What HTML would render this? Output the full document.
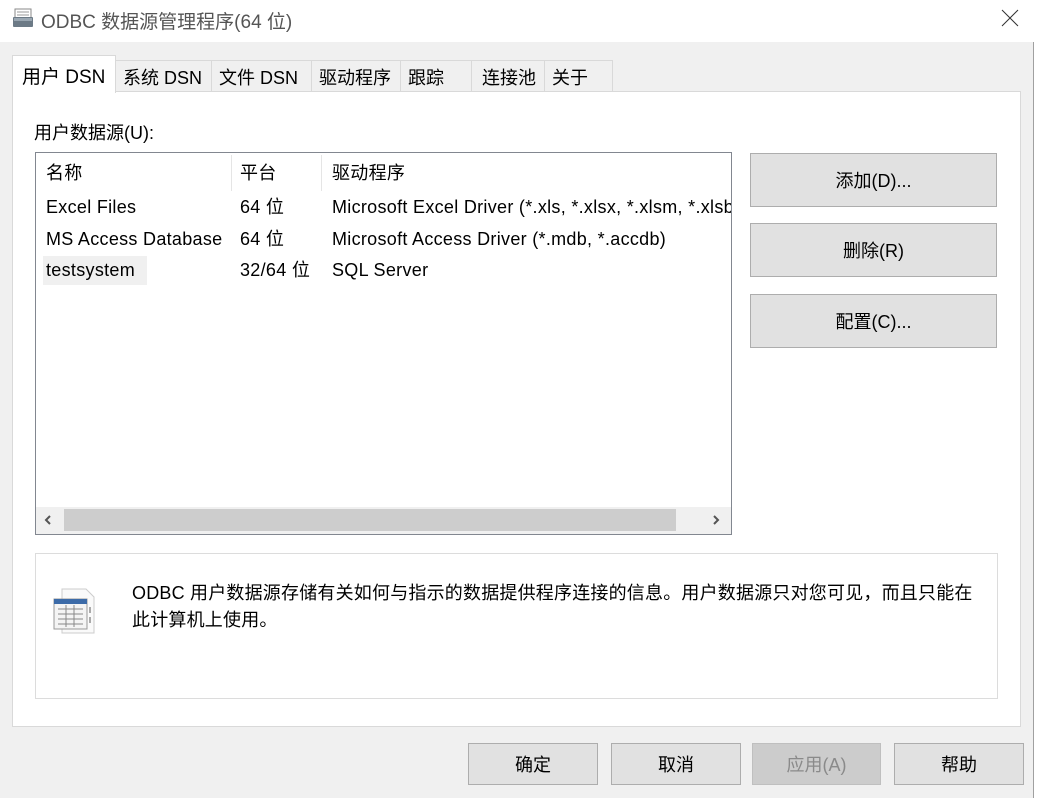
<!DOCTYPE html>
<html><head><meta charset="utf-8"><style>
*{box-sizing:border-box;margin:0;padding:0}
body{width:1046px;height:798px;background:#fff;font-family:"Liberation Sans","Noto Sans CJK SC",sans-serif;font-size:18px;color:#000;position:relative;overflow:hidden}
.a{position:absolute}
.dlg{left:0;top:42px;width:1034px;height:756px;background:#f0f0f0;border-right:1px solid #a0a0a0}
.tab{top:60px;height:31px;border:1px solid #d9d9d9;border-bottom:none;background:#f0f0f0;padding:3px 0 0 7px;white-space:nowrap}
.panel{left:12px;top:91px;width:1009px;height:636px;background:#fff;border:1px solid #d9d9d9}
.btn{background:#e1e1e1;border:1px solid #adadad;text-align:center;display:flex;align-items:center;justify-content:center}
.row{height:32px;line-height:32px;white-space:nowrap;letter-spacing:.3px}
</style></head><body>
<svg class="a" style="left:12px;top:7px" width="22" height="22" viewBox="0 0 22 22"><rect x="3" y="2" width="16" height="9" fill="#fff" stroke="#8a8a8a"/><path d="M5 5h12M5 8h12" stroke="#999"/><rect x="1" y="10" width="20" height="10" rx="1" fill="#6c7a86"/><rect x="2" y="11" width="18" height="3" fill="#9aa7b2"/></svg>
<div class="a" style="left:41px;top:7px;font-size:19px;color:#555">ODBC 数据源管理程序(64 位)</div>
<svg class="a" style="left:1001px;top:9px" width="18" height="18"><path d="M1 1L17 17M17 1L1 17" stroke="#333" stroke-width="1"/></svg>
<div class="a dlg"></div>
<div class="a tab" style="left:115px;width:97px">系统 DSN</div>
<div class="a tab" style="left:211px;width:101px">文件 DSN</div>
<div class="a tab" style="left:311px;width:90px">驱动程序</div>
<div class="a tab" style="left:400px;width:72px">跟踪</div>
<div class="a tab" style="left:471px;width:74px;padding-left:10px">连接池</div>
<div class="a tab" style="left:544px;width:69px">关于</div>
<div class="a panel"></div>
<div class="a" style="left:12px;top:55px;width:104px;height:38px;background:#fff;border:1px solid #d9d9d9;border-bottom:none;padding:6px 0 0 9px;font-size:19px">用户 DSN</div>
<div class="a" style="left:34px;top:119px">用户数据源(U):</div>
<div class="a" style="left:35px;top:152px;width:697px;height:383px;border:1px solid #828790;background:#fff;overflow:hidden">
 <div class="a" style="left:195px;top:2px;width:1px;height:36px;background:#e5e5e5"></div>
 <div class="a" style="left:285px;top:2px;width:1px;height:36px;background:#e5e5e5"></div>
 <div class="a row" style="left:10px;top:4px">名称</div>
 <div class="a row" style="left:204px;top:4px">平台</div>
 <div class="a row" style="left:296px;top:4px">驱动程序</div>
 <div class="a row" style="left:10px;top:38px">Excel Files</div>
 <div class="a row" style="left:204px;top:38px">64 位</div>
 <div class="a row" style="left:296px;top:38px">Microsoft Excel Driver (*.xls, *.xlsx, *.xlsm, *.xlsb)</div>
 <div class="a row" style="left:10px;top:70px">MS Access Database</div>
 <div class="a row" style="left:204px;top:70px">64 位</div>
 <div class="a row" style="left:296px;top:70px">Microsoft Access Driver (*.mdb, *.accdb)</div>
 <div class="a" style="left:7px;top:103px;width:104px;height:29px;background:#f0f0f0"></div>
 <div class="a row" style="left:10px;top:101px">testsystem</div>
 <div class="a row" style="left:204px;top:101px">32/64 位</div>
 <div class="a row" style="left:296px;top:101px">SQL Server</div>
 <div class="a" style="left:0;top:354px;width:695px;height:27px;background:#f0f0f0"></div>
 <div class="a" style="left:28px;top:356px;width:612px;height:22px;background:#cdcdcd"></div>
 <svg class="a" style="left:6px;top:361px" width="12" height="12"><path d="M8 2L4 6L8 10" stroke="#555" stroke-width="2" fill="none"/></svg>
 <svg class="a" style="left:674px;top:361px" width="12" height="12"><path d="M4 2L8 6L4 10" stroke="#555" stroke-width="2" fill="none"/></svg>
</div>
<div class="a btn" style="left:750px;top:153px;width:247px;height:54px">添加(D)...</div>
<div class="a btn" style="left:750px;top:223px;width:247px;height:54px">删除(R)</div>
<div class="a btn" style="left:750px;top:294px;width:247px;height:54px">配置(C)...</div>
<div class="a" style="left:35px;top:553px;width:963px;height:146px;border:1px solid #dcdcdc;background:#fff"></div>
<svg class="a" style="left:52px;top:587px" width="48" height="48" viewBox="0 0 48 48"><path d="M10 2h24l8 8v36H10z" fill="#fafafa" stroke="#ccc"/><rect x="2" y="12" width="33" height="30" fill="#f4f4f4" stroke="#999"/><rect x="2" y="12" width="33" height="5" fill="#3c6ba8"/><path d="M6 22h25M6 27h25M6 32h25M6 37h25M14 18v22M22 18v22" stroke="#888"/><path d="M38 20v6M38 30v6" stroke="#aaa" stroke-width="2"/></svg>
<div class="a" style="left:132px;top:580px;line-height:27px;letter-spacing:.2px;white-space:nowrap">ODBC 用户数据源存储有关如何与指示的数据提供程序连接的信息。用户数据源只对您可见，而且只能在<br>此计算机上使用。</div>
<div class="a btn" style="left:468px;top:743px;width:130px;height:42px">确定</div>
<div class="a btn" style="left:611px;top:743px;width:130px;height:42px">取消</div>
<div class="a btn" style="left:752px;top:743px;width:129px;height:42px;background:#cccccc;border-color:#bfbfbf;color:#8a8a8a">应用(A)</div>
<div class="a btn" style="left:894px;top:743px;width:130px;height:42px">帮助</div>
</body></html>
